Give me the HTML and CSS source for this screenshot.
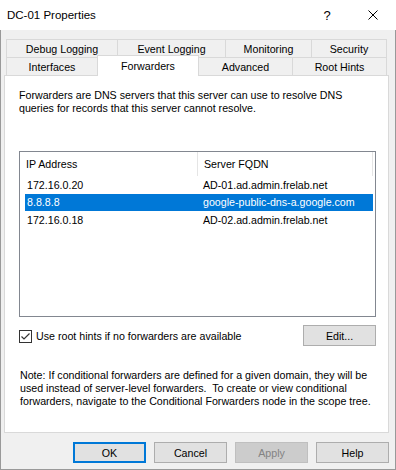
FILE: index.html
```html
<!DOCTYPE html>
<html lang="en">

<head>
    <meta charset="UTF-8">
    <meta name="viewport" content="width=device-width, initial-scale=1.0">
    <title>DC-01 Properties</title>
    <link rel="stylesheet" href="styles.css">
</head>

<body>

    <div class="window">
        <div class="titlebar">
            <div class="title">DC-01 Properties</div>
            <div class="caption-btn help-btn">?</div>
            <div class="caption-btn close-btn">
                <svg width="10" height="10" viewBox="0 0 10 10">
                    <path d="M0.5 0.5 L9.5 9.5 M9.5 0.5 L0.5 9.5" stroke="#000" stroke-width="1" fill="none" />
                </svg>
            </div>
        </div>

        <div class="client">
            <div class="tabs">
                <div class="tab-row">
                    <div class="tab w-debug">Debug Logging</div>
                    <div class="tab w-event">Event Logging</div>
                    <div class="tab w-monitor">Monitoring</div>
                    <div class="tab w-security last">Security</div>
                </div>
                <div class="tab-row">
                    <div class="tab w-iface">Interfaces</div>
                    <div class="tab w-fwd active">Forwarders</div>
                    <div class="tab w-adv">Advanced</div>
                    <div class="tab w-root last">Root Hints</div>
                </div>
            </div>

            <div class="panel">
                <p class="intro">Forwarders are DNS servers that this server can use to resolve DNS<br>queries for records that this server cannot resolve.</p>

                <div class="listview">
                    <div class="lv-header">
                        <div class="lv-col">IP Address</div>
                        <div class="lv-col">Server FQDN</div>
                    </div>
                    <div class="lv-body">
                        <div class="lv-row">
                            <div>172.16.0.20</div>
                            <div>AD-01.ad.admin.frelab.net</div>
                        </div>
                        <div class="lv-row selected">
                            <div>8.8.8.8</div>
                            <div>google-public-dns-a.google.com</div>
                        </div>
                        <div class="lv-row">
                            <div>172.16.0.18</div>
                            <div>AD-02.ad.admin.frelab.net</div>
                        </div>
                    </div>
                </div>

                <div class="options">
                    <label class="check">
                        <svg width="13" height="13" viewBox="0 0 13 13">
                            <rect x="0.5" y="0.5" width="12" height="12" fill="#fff" stroke="#333" />
                            <path d="M2.5 6.5 L5 9 L10.5 3.5" stroke="#333" stroke-width="1.2" fill="none" />
                        </svg>
                        <span>Use root hints if no forwarders are available</span>
                    </label>
                    <button class="btn">Edit...</button>
                </div>

                <p class="note">Note: If conditional forwarders are defined for a given domain, they will be<br>used instead of server-level forwarders.&nbsp; To create or view conditional<br>forwarders, navigate to the Conditional Forwarders node in the scope tree.</p>
            </div>

            <div class="buttons">
                <button class="btn default">OK</button>
                <button class="btn">Cancel</button>
                <button class="btn disabled">Apply</button>
                <button class="btn">Help</button>
            </div>
        </div>
    </div>

</body>

</html>
```

FILE: styles.css
```css
* {
    margin: 0;
    padding: 0;
    box-sizing: border-box;
}

body {
    width: 396px;
    height: 470px;
    overflow: hidden;
    background: #fff;
    font-family: "Liberation Sans", Arial, sans-serif;
    font-size: 8pt;
    color: #000;
}

.window {
    width: 396px;
    height: 470px;
    display: flex;
    flex-direction: column;
}

/* 标题栏 */
.titlebar {
    height: 30px;
    display: flex;
    align-items: center;
    background: #fff;
}

.title {
    flex: 1;
    padding-left: 7px;
    font-size: 11.5px;
}

.caption-btn {
    width: 46px;
    height: 30px;
    display: flex;
    align-items: center;
    justify-content: center;
    font-size: 13px;
}

/* 窗口主体 */
.client {
    flex: 1;
    background: #f0f0f0;
    border: 1px solid #999;
    border-top: none;
    padding: 9px 6px 0 3px;
}

.tabs {
    margin-left: 2px;
}

.tab-row {
    display: flex;
    height: 18px;
}

.tab {
    height: 18px;
    border: 1px solid #d9d9d9;
    border-right: none;
    border-bottom: none;
    background: #f0f0f0;
    display: flex;
    align-items: center;
    justify-content: center;
}

.tab.last {
    border-right: 1px solid #d9d9d9;
}

.tab.active {
    height: 21px;
    margin-top: -2px;
    margin-bottom: -1px;
    background: #fff;
    border-right: 1px solid #d9d9d9;
    position: relative;
    z-index: 1;
    padding-bottom: 1px;
}

.tab.active + .tab {
    border-left: none;
}

.w-debug { width: 111px; }
.w-event { width: 108px; }
.w-monitor { width: 86px; }
.w-security { width: 76px; }
.w-iface { width: 91px; }
.w-fwd { width: 102px; }
.w-adv { width: 93px; }
.w-root { width: 95px; }

/* 选项卡内容 */
.panel {
    height: 358px;
    width: 385px;
    background: #fff;
    border: 1px solid #d9d9d9;
    padding: 13px 0 0 14px;
}

.intro,
.note {
    line-height: 13px;
}

.listview {
    margin-top: 36px;
    width: 357px;
    height: 166px;
    border: 1px solid #828790;
}

.lv-header {
    display: flex;
    height: 24px;
}

.lv-col {
    display: flex;
    align-items: center;
    padding-left: 6px;
    border-right: 1px solid #e5e5e5;
}

.lv-col:first-child {
    width: 178px;
}

.lv-col:last-child {
    width: 175px;
}

.lv-body {
    padding-left: 5px;
}

.lv-row {
    width: 348px;
    height: 17.5px;
    display: grid;
    grid-template-columns: 176px 1fr;
    align-items: center;
}

.lv-row div {
    padding-left: 2px;
    white-space: nowrap;
}

.lv-row.selected {
    background: #0078d7;
    color: #fff;
}

.options {
    margin-top: 8px;
    width: 357px;
    display: flex;
    align-items: center;
    justify-content: space-between;
}

.check {
    display: flex;
    align-items: center;
    gap: 4px;
    padding-top: 1px;
}

.btn {
    width: 73px;
    height: 21px;
    background: #e1e1e1;
    border: 1px solid #adadad;
    font-family: inherit;
    font-size: 8pt;
    color: #000;
}

.btn.default {
    border: 2px solid #0078d7;
}

.btn.disabled {
    background: #cccccc;
    border-color: #bfbfbf;
    color: #838383;
}

.note {
    margin-top: 23px;
    padding-left: 1px;
}

.buttons {
    display: flex;
    justify-content: flex-end;
    gap: 8px;
    width: 385px;
    margin-top: 9px;
}
```
